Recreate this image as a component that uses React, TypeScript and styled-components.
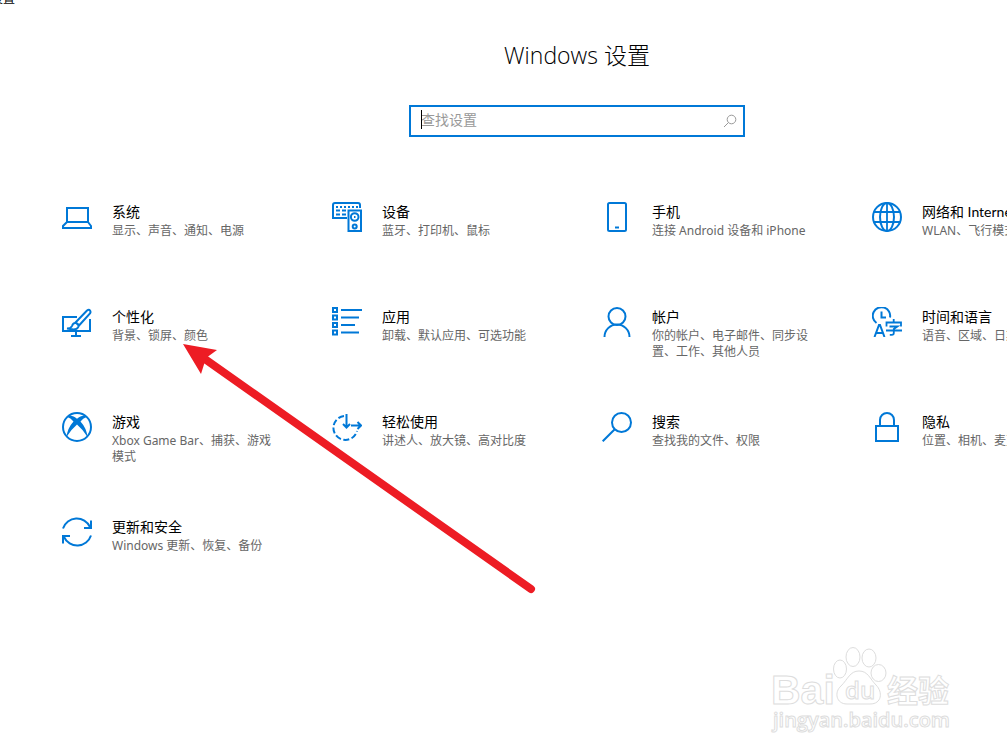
import React from 'react';
import styled, { createGlobalStyle } from 'styled-components';

const GlobalStyle = createGlobalStyle`
  * { box-sizing: border-box; }
  body {
    margin: 0;
    background: #fff;
    color: #000;
    font-family: "Noto Sans", "Noto Sans CJK SC", sans-serif;
  }
`;

const Page = styled.div`
  position: relative;
  min-height: 100vh;
  overflow: hidden;
`;

const WindowCaption = styled.div`
  display: flex;
  justify-content: flex-end;
  align-items: flex-end;
  width: 15px;
  height: 7px;
  overflow: hidden;
  font-size: 12px;
  line-height: 16px;
  white-space: nowrap;
`;

const Content = styled.main`
  display: flex;
  flex-direction: column;
  align-items: center;
  width: max-content;
  padding: 32px 62px 0;
`;

const Title = styled.h1`
  margin: 0;
  font-family: "Open Sans", "Noto Sans CJK SC", sans-serif;
  font-size: 23px;
  font-weight: 300;
  line-height: 32px;
`;

const SearchBox = styled.label`
  position: relative;
  display: flex;
  align-items: center;
  width: 336px;
  height: 32px;
  margin-top: 34px;
  padding: 0 6px 0 10px;
  border: 2px solid #0078d7;

  &::before {
    content: "";
    position: absolute;
    left: 10px;
    top: 3px;
    width: 1px;
    height: 19px;
    background: #000;
  }
`;

const SearchInput = styled.input`
  flex: 1;
  min-width: 0;
  padding: 0 0 2px;
  border: 0;
  outline: 0;
  background: transparent;
  font: inherit;
  font-size: 14px;
  line-height: 20px;

  &::placeholder {
    color: #999;
    opacity: 1;
  }
`;

const Grid = styled.nav`
  display: grid;
  grid-template-columns: repeat(4, 220px);
  grid-auto-rows: 65px;
  gap: 40px 50px;
  margin-top: 65px;
`;

const Category = styled.a`
  display: flex;
  align-items: flex-start;
  gap: 20px;
  color: inherit;
  text-decoration: none;
`;

const CategoryText = styled.span`
  display: flex;
  flex-direction: column;
  gap: 1px;
  width: 164px;
`;

const Name = styled.span`
  font-family: Lato, "Noto Sans CJK SC", sans-serif;
  font-size: 14px;
  line-height: 20px;
  white-space: nowrap;
`;

const Summary = styled.span`
  color: #666;
  font-size: 12px;
  line-height: 16px;
`;

const Icon = styled.svg`
  flex: none;
  width: 30px;
  height: 30px;
  fill: none;
  stroke: #0078d7;
  stroke-width: 2;
`;

const SearchIcon = styled.svg`
  width: 14px;
  height: 14px;
  fill: none;
  stroke: #999;
`;

const Arrow = styled.svg`
  position: absolute;
  left: 180px;
  top: 340px;
  width: 360px;
  height: 260px;
  pointer-events: none;
`;

const Watermark = styled.svg`
  position: absolute;
  left: 768px;
  top: 644px;
  width: 188px;
  height: 92px;
  pointer-events: none;
  fill: #fff;
  stroke: #ddd;
  font-family: "Open Sans", "Noto Sans CJK SC", sans-serif;
`;

const Wordmark = styled.text`
  font-family: "Liberation Sans", sans-serif;
  font-size: 41px;
  font-weight: 700;
`;

const icons: Record<string, React.ReactNode> = {
  system: <path d="M5 6h21v14H5zM5 20l-4 4v2h28v-2l-3-4" />,
  devices: (
    <>
      <path d="M15 16H1V3q0-2 2-2h23q2 0 2 2v3" />
      <path d="M4 5h22" strokeDasharray="2 2" />
      <path d="M4 8.500h10M4 12.500h10" strokeDasharray="4 2" />
      <path d="M16.500 8.500h12.500V29H16.500z" />
      <circle cx="22.700" cy="15" r="3.800" />
      <circle cx="22.700" cy="24.500" r="2" />
      <path d="M22 15h1.500" />
    </>
  ),
  phone: (
    <>
      <rect x="6" y="1" width="18" height="28" rx="1.500" />
      <path d="M13 25.500h4" />
    </>
  ),
  network: (
    <>
      <circle cx="15" cy="15" r="14" />
      <ellipse cx="15" cy="15" rx="7" ry="14" />
      <path d="M2 10h26M2 20h26M15 1v28" strokeWidth="1.800" />
    </>
  ),
  personal: (
    <>
      <path d="M15 10H1v14h27V12M14 24v5M9 29h10" />
      <path d="M13.500 15.500 25 3.500q2-1.500 3 0t0 3L17 18.500zM5 21.500q4 0 5-2.500 1-3.500 4-3 3 1 2.500 3.500-1 3-5 3z" />
    </>
  ),
  apps: (
    <>
      <path d="M1 1h4v4H1zM1 8.500h4v4H1zM1 16h4v4H1zM1 23.500h4v4H1z" />
      <path d="M9 3h21M9 10.500h18M9 18h14M9 25.500h18" />
    </>
  ),
  accounts: (
    <>
      <circle cx="15" cy="9.500" r="8.500" />
      <path d="M2.500 30a12.500 12.500 0 0 1 25 0" />
    </>
  ),
  time: (
    <>
      <path d="M4.500 16A8.700 8.700 0 1 1 18 10.500M9.500 4.500v6h4.500" />
      <path d="M2.500 30 7 18h1l4.500 12M4 26h7" />
      <path d="M14.500 19.500v-4h14.500v4M21.700 12v3.500M17.500 19.500h8l-3.700 2.500v4q0 1.800-2 1.800h-2M14 23.500h16" strokeWidth="1.800" />
    </>
  ),
  gaming: (
    <>
      <circle cx="15" cy="15" r="14" />
      <path
        d="M5.500 5Q8 3 11 4.300 13 5 15 6.800 17 5 19 4.300 22 3 24.500 5 21 6 18.500 9.500 24.500 16 25.500 25 21 17.500 15 12.500 9 17.500 4.500 25 5.500 16 11.500 9.500 9 6 5.500 5z"
        fill="#0078d7"
        stroke="none"
      />
    </>
  ),
  ease: (
    <>
      <path d="M12 4A12 12 0 1 0 25 19" strokeDasharray="6 2.500" />
      <path d="M14.500 2v14M11 12l3.500 3.500L18 12M19 13.500h10M25.500 10l3.500 3.500-3.500 3.500" />
    </>
  ),
  search: (
    <>
      <circle cx="19.500" cy="10.500" r="9.500" />
      <path d="M12.500 17.500.7 29.300" />
    </>
  ),
  privacy: <path d="M4 14h22v15H4zM8 14V8a7 7 0 0 1 14 0v6" />,
  update: (
    <path d="M1 11.500A14.500 14.500 0 0 1 28 10M29 3.500V11h-7M29 18.500A14.500 14.500 0 0 1 2 20M1 26.500V19h7" />
  ),
};

const categories = [
  { icon: 'system', name: '系统', summary: '显示、声音、通知、电源' },
  { icon: 'devices', name: '设备', summary: '蓝牙、打印机、鼠标' },
  { icon: 'phone', name: '手机', summary: '连接 Android 设备和 iPhone' },
  { icon: 'network', name: '网络和 Internet', summary: 'WLAN、飞行模式、VPN' },
  { icon: 'personal', name: '个性化', summary: '背景、锁屏、颜色' },
  { icon: 'apps', name: '应用', summary: '卸载、默认应用、可选功能' },
  { icon: 'accounts', name: '帐户', summary: '你的帐户、电子邮件、同步设置、工作、其他人员' },
  { icon: 'time', name: '时间和语言', summary: '语音、区域、日期' },
  { icon: 'gaming', name: '游戏', summary: 'Xbox Game Bar、捕获、游戏模式' },
  { icon: 'ease', name: '轻松使用', summary: '讲述人、放大镜、高对比度' },
  { icon: 'search', name: '搜索', summary: '查找我的文件、权限' },
  { icon: 'privacy', name: '隐私', summary: '位置、相机、麦克风' },
  { icon: 'update', name: '更新和安全', summary: 'Windows 更新、恢复、备份' },
];

export default function App() {
  return (
    <Page>
      <GlobalStyle />
      <WindowCaption>设置</WindowCaption>
      <Content>
        <Title>Windows 设置</Title>
        <SearchBox>
          <SearchInput type="text" placeholder="查找设置" aria-label="查找设置" />
          <SearchIcon viewBox="0 0 14 14" aria-hidden="true">
            <circle cx="8.500" cy="5.500" r="4.300" />
            <path d="M5.500 8.500 1 13" />
          </SearchIcon>
        </SearchBox>
        <Grid aria-label="设置">
          {categories.map((c) => (
            <Category key={c.icon} href={`#${c.icon}`}>
              <Icon viewBox="0 0 30 30" aria-hidden="true">{icons[c.icon]}</Icon>
              <CategoryText>
                <Name>{c.name}</Name>
                <Summary>{c.summary}</Summary>
              </CategoryText>
            </Category>
          ))}
        </Grid>
      </Content>
      <Arrow viewBox="0 0 360 260" aria-hidden="true">
        <path d="M22 17 351 249" stroke="#ed1c24" strokeWidth="8" strokeLinecap="round" />
        <path d="M3 4 37 10 26 18 21 34z" fill="#ed1c24" />
      </Arrow>
      <Watermark viewBox="0 0 188 92" role="img" aria-label="Baidu 经验">
        <Wordmark x="3" y="60">Bai</Wordmark>
        <ellipse cx="72" cy="25" rx="6.500" ry="9" />
        <ellipse cx="85" cy="13" rx="7" ry="9.500" />
        <ellipse cx="101" cy="14" rx="7" ry="9" />
        <ellipse cx="110.500" cy="29" rx="7.500" ry="8.500" />
        <path d="M91 27c9 0 11 8 17 14 7 7 6 19-6 19H79c-11 0-13-12-6-18 7-7 9-15 18-15z" />
        <text x="77" y="55" fontSize="24" fontWeight="600">du</text>
        <text x="119" y="58" fontSize="31" fontWeight="700">经验</text>
        <text x="5" y="83" fontSize="20" fontWeight="600">jingyan.baidu.com</text>
      </Watermark>
    </Page>
  );
}
